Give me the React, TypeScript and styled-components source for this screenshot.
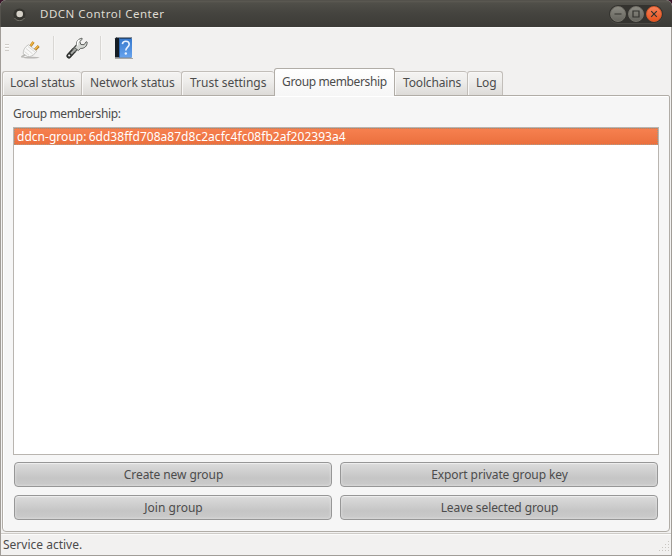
import React from 'react';
import styled, { createGlobalStyle } from 'styled-components';

const GlobalStyle = createGlobalStyle`
  * { box-sizing: border-box; }
  body { margin: 0; background: #3a1428; }
`;

const Window = styled.main`
  width: 672px;
  height: 556px;
  display: flex;
  flex-direction: column;
  overflow: hidden;
  background: #f2f1f0;
  border-radius: 6px 6px 0 0;
  color: #4c4c4c;
  font: 12px/16px "Noto Sans", "Open Sans", sans-serif;
  white-space: nowrap;
`;

const TitleBar = styled.header`
  height: 27px;
  flex: none;
  display: flex;
  align-items: center;
  padding: 0 9px 0 12px;
  border-top: 1px solid #54524c;
  border-left: 1px solid #54524c;
  background: linear-gradient(#5d5b54 0, #504f49 2px, #45443f 12px, #3c3b37 100%);
`;

const Title = styled.h1`
  margin: 0 auto 0 14px;
  color: #dfdbd2;
  font-size: 11.5px;
  font-weight: 400;
  line-height: 16px;
  letter-spacing: 0.5px;
`;

const WindowControls = styled.div`
  display: flex;
  gap: 2px;
  padding: 1px;
  margin-bottom: 1px;
  border-radius: 10px;
  background: #34332f;
  box-shadow: 0 1px 0 #4b4a45;
`;

const ControlButton = styled.button<{ $close?: boolean }>`
  width: 16px;
  height: 16px;
  padding: 0;
  border: 1px solid ${(p) => (p.$close ? '#d65a2c' : '#75736b')};
  border-radius: 50%;
  background: ${(p) =>
    p.$close ? 'linear-gradient(#f78058, #e9541f)' : 'linear-gradient(#8b8a82, #66655e)'};
  svg { display: block; }
`;

const Body = styled.div`
  flex: 1;
  min-height: 0;
  display: flex;
  flex-direction: column;
  border: 1px solid #a19d98;
  border-top: 0;
`;

const Toolbar = styled.div`
  height: 41px;
  flex: none;
  display: flex;
  align-items: center;
  padding: 0 0 1px 4px;
  border-top: 1px solid #f9f8f7;
`;

const Grip = styled.div`
  width: 4px;
  height: 7px;
  margin-right: 10px;
  background: repeating-linear-gradient(#cfccc8 0 1px, #fbfbfa 1px 2px, transparent 2px 3px);
`;

const Separator = styled.div<{ $after: number }>`
  width: 2px;
  height: 24px;
  margin-right: ${(p) => p.$after}px;
  border-left: 1px solid #d9d7d4;
  border-right: 1px solid #f7f6f5;
`;

const ToolButton = styled.button<{ $after: number }>`
  width: 24px;
  height: 24px;
  margin: 0 ${(p) => p.$after}px 0 0;
  padding: 0;
  border: 0;
  background: none;
  svg { display: block; }
`;

const TabBar = styled.nav`
  height: 27px;
  flex: none;
  display: flex;
  align-items: flex-end;
  padding-left: 1px;
`;

const Tab = styled.button<{ $width: number; $active?: boolean; $tracking: number; $inset?: number }>`
  width: ${(p) => p.$width}px;
  height: ${(p) => (p.$active ? 28 : 24)}px;
  margin-bottom: ${(p) => (p.$active ? -1 : 0)}px;
  padding: ${(p) => (p.$active ? 5 : 3)}px 0 0 ${(p) => p.$inset ?? 7}px;
  z-index: ${(p) => (p.$active ? 1 : 0)};
  border: 1px solid ${(p) => (p.$active ? '#b1ada7' : '#c2beb9')};
  border-bottom: 0;
  border-right-width: ${(p) => (p.$active ? 1 : 0)}px;
  border-radius: 3px 3px 0 0;
  background: ${(p) =>
    p.$active ? 'linear-gradient(#ffffff, #f6f6f6)' : 'linear-gradient(#f4f3f2, #eeedeb 40%, #dddbd8)'};
  box-shadow: ${(p) => (p.$active ? 'none' : 'inset 1px 1px 0 #f8f7f6')};
  color: #4c4c4c;
  font: inherit;
  letter-spacing: ${(p) => p.$tracking}px;
  text-align: left;
  display: flex;
  align-items: flex-start;
  &:last-child { border-right-width: 1px; }
  &[aria-selected='true'] + & { border-left-width: 0; padding-left: 8px; border-top-left-radius: 0; }
`;

const Panel = styled.section`
  width: 668px;
  height: 437px;
  flex: none;
  margin-left: 1px;
  padding: 10px 10px 0 10px;
  display: flex;
  flex-direction: column;
  border: 1px solid #b1ada7;
  border-radius: 0 2px 4px 4px;
  background: #f6f6f6;
  box-shadow: inset 1px 1px 0 #ffffff;
`;

const Heading = styled.div`
  letter-spacing: -0.36px;
`;

const List = styled.div`
  width: 646px;
  height: 328px;
  margin-top: 5px;
  border: 1px solid #b9b5b0;
  background: #fff;
`;

const ListItem = styled.div`
  height: 17px;
  padding-left: 2px;
  border: 1px dotted #a5917f;
  background: linear-gradient(#f6804f, #eb703e);
  background-clip: border-box;
  color: #fff;
  line-height: 15px;
  letter-spacing: 0.03px;
  word-spacing: -1px;
`;

const ButtonGrid = styled.div`
  display: grid;
  grid-template-columns: 318px 318px;
  gap: 8px;
  margin: 7px 0 0 1px;
`;

const PushButton = styled.button<{ $tracking: number }>`
  height: 25px;
  padding: 0 0 0 1px;
  border: 1px solid #979797;
  border-radius: 4px;
  background: linear-gradient(#dcdcdc, #c5c5c5 65%, #cbcbcb);
  box-shadow: inset 0 1px 0 #ededed, inset 0 0 3px #e4e4e4;
  color: #4c4c4c;
  font: inherit;
  letter-spacing: ${(p) => p.$tracking}px;
`;

const StatusBar = styled.footer`
  flex: 1;
  display: flex;
  justify-content: space-between;
  align-items: flex-end;
  margin-top: 1px;
  padding: 0 1px 2px 2px;
  border-top: 1px solid #cfccc8;
  box-shadow: inset 0 1px 0 #fbfbfa;
`;

const AppIcon = () => (
  <svg width="13" height="13" viewBox="0 0 13 13">
    <circle cx="6.5" cy="6.5" r="6" fill="#35342f" />
    <path d="M1.5 10a6 6 0 0 0 10 0" fill="none" stroke="#77756d" />
    <circle cx="6.7" cy="6" r="3.3" fill="#d5d1c8" />
  </svg>
);

const PlugIcon = () => (
  <svg width="24" height="24" viewBox="0 0 24 24">
    <ellipse cx="12" cy="21.6" rx="8.5" ry="0.8" fill="#9b9a97" opacity=".65" />
    <path d="M3 20.8 7 18" stroke="#bab9b6" strokeWidth="2" strokeLinecap="round" />
    <path d="m11.2 10.5 3.3-4.5M15.8 14l3.9-4" stroke="#b57c1c" strokeWidth="2.7" />
    <path d="m11.5 9.8 2.8-3.8M16 13.2l3.2-3.2" stroke="#efb546" strokeWidth="1.5" />
    <path d="m9.5 8.7 8.2 6.5-1.8 2.3c-2 2.3-5 3.5-7.5 3L4.2 17.6c0-2.5.8-5 3-7.2z" fill="#f8f8f7" stroke="#b8b7b5" strokeWidth=".8" />
    <path d="m7 12.5 6.5 5.3M5.5 15.5l4.5 3.7M9 10.5l7 5.5" stroke="#d2d1ce" strokeWidth=".8" />
  </svg>
);

const WrenchIcon = () => (
  <svg width="24" height="24" viewBox="0 0 24 24">
    <path d="M3.8 20 9 14.3" stroke="#303230" strokeWidth="5" strokeLinecap="round" />
    <path d="m8.5 14.8 4-4.3" stroke="#555855" strokeWidth="4.8" />
    <path d="m6 17.7 6.5-7" stroke="#a5a7a4" strokeWidth="2" />
    <path d="m9.7 11.7 1.8-2.4c-.5-3.4 1.5-6.4 5.3-7.1l.5 1-2.5 2.3 1.1 3 3.2.2 2.1-3 1 .5c0 4.2-3.2 6.5-6.5 6.2l-2.4 2.1z" fill="#d6d8d4" stroke="#4d504d" strokeWidth=".9" />
    <path d="M12.5 9.5c-.4-2.3.3-4.2 2-5.3" fill="none" stroke="#fff" strokeWidth="1.4" />
    <circle cx="4.2" cy="19.5" r="1.1" fill="#f2f1f0" />
  </svg>
);

const HelpIcon = () => (
  <svg width="24" height="24" viewBox="0 0 24 24">
    <defs>
      <linearGradient id="cover" x1="0" y1="0" x2="0" y2="1">
        <stop stopColor="#3578cc" />
        <stop offset="1" stopColor="#67a3ee" />
      </linearGradient>
    </defs>
    <path d="M3 22.5h18" stroke="#a8a7a5" />
    <path d="M3 2.5 4.5 1h15v20.5H3z" fill="#141c25" />
    <path d="M4.5 1.5h15" stroke="#8a9199" />
    <path d="M7 2.5h13v19H7z" fill="url(#cover)" />
    <path d="M7.5 2.5v19" stroke="#2c65ae" />
    <path d="M10.4 8.2c.2-2 1.5-3 3.4-3 2.1 0 3.4 1.3 3.4 3.1 0 2.7-3.4 3-3.4 6.1" fill="none" stroke="#e8f2ff" strokeWidth="1.6" />
    <circle cx="13.8" cy="17.5" r="1.2" fill="#e8f2ff" />
  </svg>
);

const ControlGlyph = ({ d }: { d: string }) => (
  <svg width="14" height="14" viewBox="0 0 14 14">
    <path d={d} fill="none" stroke="#33322e" strokeWidth="1.2" />
  </svg>
);

const ResizeGrip = () => (
  <svg width="12" height="13" viewBox="0 0 12 13">
    {[0, 1, 2, 3].map((row) =>
      Array.from({ length: row + 1 }, (_, i) => (
        <rect key={`${row}-${i}`} x={10 - i * 3} y={1 + row * 3} width="1" height="1" fill="#c9c6c1" />
      )),
    )}
  </svg>
);

const tabs = [
  { label: 'Local status', width: 79, tracking: -0.15 },
  { label: 'Network status', width: 100, tracking: -0.08, inset: 8 },
  { label: 'Trust settings', width: 93, tracking: 0, inset: 8 },
  { label: 'Group membership', width: 121, tracking: -0.36, active: true },
  { label: 'Toolchains', width: 72, tracking: -0.15 },
  { label: 'Log', width: 36, tracking: -0.2, inset: 8 },
];

const actions = [
  { label: 'Create new group', tracking: -0.08 },
  { label: 'Export private group key', tracking: -0.1 },
  { label: 'Join group', tracking: 0.02 },
  { label: 'Leave selected group', tracking: -0.1 },
];

export default function App() {
  return (
    <>
      <GlobalStyle />
      <Window>
        <TitleBar>
          <AppIcon />
          <Title>DDCN Control Center</Title>
          <WindowControls>
            <ControlButton aria-label="Minimize"><ControlGlyph d="M3.5 7h7" /></ControlButton>
            <ControlButton aria-label="Maximize"><ControlGlyph d="M4 4h6v6H4z" /></ControlButton>
            <ControlButton $close aria-label="Close"><ControlGlyph d="m4.2 4.2 5.6 5.6m0-5.6L4.2 9.8" /></ControlButton>
          </WindowControls>
        </TitleBar>
        <Body>
          <Toolbar>
            <Grip />
            <ToolButton $after={10} aria-label="Connect"><PlugIcon /></ToolButton>
            <Separator $after={10} />
            <ToolButton $after={11} aria-label="Settings"><WrenchIcon /></ToolButton>
            <Separator $after={10} />
            <ToolButton $after={0} aria-label="Help"><HelpIcon /></ToolButton>
          </Toolbar>
          <TabBar role="tablist">
            {tabs.map((t) => (
              <Tab
                key={t.label}
                role="tab"
                aria-selected={!!t.active}
                $active={t.active}
                $width={t.width}
                $tracking={t.tracking}
                $inset={t.inset}
              >
                {t.label}
              </Tab>
            ))}
          </TabBar>
          <Panel>
            <Heading>Group membership:</Heading>
            <List>
              <ListItem>ddcn-group: 6dd38ffd708a87d8c2acfc4fc08fb2af202393a4</ListItem>
            </List>
            <ButtonGrid>
              {actions.map((a) => (
                <PushButton key={a.label} $tracking={a.tracking}>{a.label}</PushButton>
              ))}
            </ButtonGrid>
          </Panel>
          <StatusBar>
            <span>Service active.</span>
            <ResizeGrip />
          </StatusBar>
        </Body>
      </Window>
    </>
  );
}
